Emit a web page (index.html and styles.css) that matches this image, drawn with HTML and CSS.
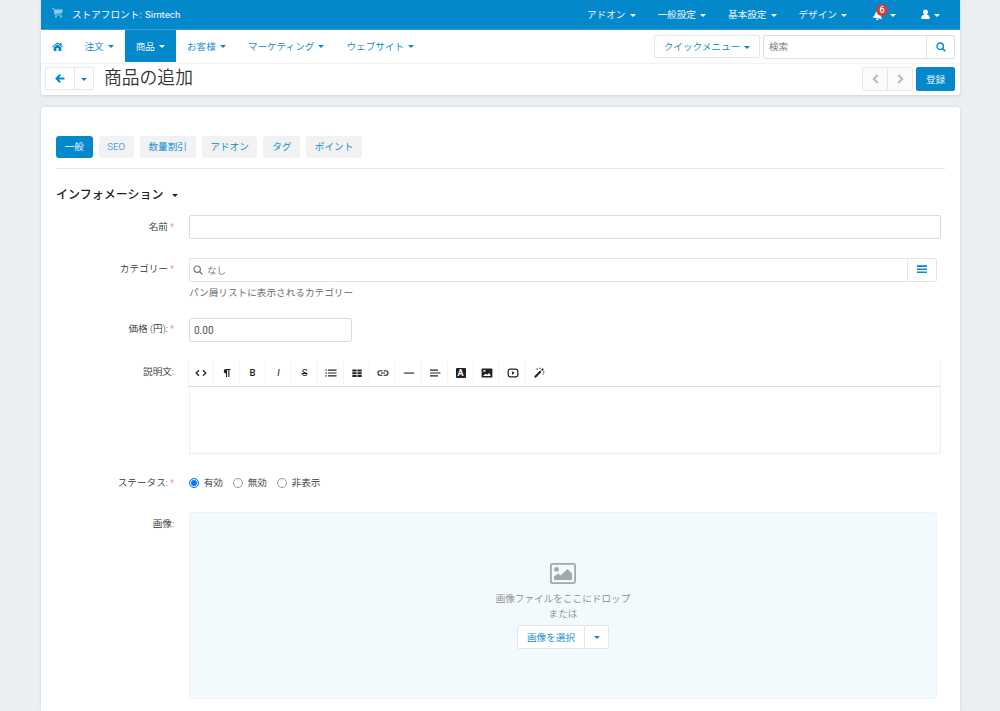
FILE: index.html
```html
<!DOCTYPE html>
<html lang="ja">
<head>
    <meta charset="UTF-8">
    <title>商品の追加</title>
    <link rel="stylesheet" href="styles.css">
</head>
<body>
<div class="header">
  <div class="topbar">
    <svg class="cart" width="11" height="10" viewBox="0 0 11 10"><path d="M0 .6h1.900L3.200 7h6.600" fill="none" stroke="currentColor" stroke-width=".9"/><path d="M2.300 1.400h8.500l-.8 3.900-7 .6z" fill="currentColor"/><circle cx="4" cy="8.700" r=".9" fill="currentColor"/><circle cx="9" cy="8.700" r=".9" fill="currentColor"/></svg>
    <span class="store">ストアフロント: Simtech</span>
    <ul class="topmenu">
      <li>アドオン<b class="caret"></b></li>
      <li>一般設定<b class="caret"></b></li>
      <li>基本設定<b class="caret"></b></li>
      <li>デザイン<b class="caret"></b></li>
      <li class="bell"><svg width="12" height="12" viewBox="0 0 12 12"><path d="M6 1C3.8 1.2 3.2 3 3 5.5 2.8 7.5 2 8.3.7 9.3h10.6C10 8.3 9.2 7.5 9 5.5 8.8 3 8.200 1.200 6 1zM4.600 10h2.800c-.3 1.700-2.500 1.700-2.800 0z" fill="currentColor" transform="rotate(12 6 6)"/></svg><span class="badge">6</span><b class="caret"></b></li>
      <li class="user"><svg width="9" height="11" viewBox="0 0 9 11"><path d="M4.500.5C2.900.5 2 1.600 2 3.100c0 1.200.6 2.200 1.300 2.700C1.500 6 .2 7.200.2 9.200c0 .5.3.8.8.8h7c.5 0 .8-.3.8-.8 0-2-1.300-3.200-3.100-3.400C6.400 5.300 7 4.300 7 3.100 7 1.600 6.100.5 4.500.5z" fill="currentColor"/></svg><b class="caret"></b></li>
    </ul>
  </div>
  <div class="navbar">
    <ul class="menu">
      <li class="home"><svg width="11" height="9" viewBox="0 0 11 9"><path d="M5.500.3 0 4.800l.6.700L5.500 1.500l4.900 4 .6-.7-1.600-1.300V.9H8v1.400zM5.500 2.300 1.700 5.400V9h2.800V6h2v3h2.800V5.400z" fill="currentColor"/></svg></li>
      <li>注文<b class="caret"></b></li>
      <li class="active">商品<b class="caret"></b></li>
      <li>お客様<b class="caret"></b></li>
      <li>マーケティング<b class="caret"></b></li>
      <li>ウェブサイト<b class="caret"></b></li>
    </ul>
    <button class="btn quick">クイックメニュー<b class="caret"></b></button>
    <div class="search">
      <input type="text" placeholder="検索">
      <span class="go"><svg width="10" height="10" viewBox="0 0 10 10" fill="none" stroke="currentColor"><circle cx="4.200" cy="4.200" r="3.200" stroke-width="1.400"/><path d="M6.500 6.500 9.300 9.300" stroke-width="1.600"/></svg></span>
    </div>
  </div>
  <div class="titlebar">
    <div class="group back">
      <button class="btn"><svg width="10" height="9" viewBox="0 0 10 9" fill="none" stroke="currentColor" stroke-width="2"><path d="M9.500 4.500H1.500M5.200.8 1.500 4.500 5.200 8.200"/></svg></button>
      <button class="btn"><b class="caret"></b></button>
    </div>
    <h1>商品の追加</h1>
    <div class="group pager">
      <button class="btn"><svg width="7" height="10" viewBox="0 0 7 10" fill="none" stroke="currentColor" stroke-width="2"><path d="M5.800 1 1.800 5l4 4"/></svg></button>
      <button class="btn"><svg width="7" height="10" viewBox="0 0 7 10" fill="none" stroke="currentColor" stroke-width="2"><path d="M1.200 1l4 4-4 4"/></svg></button>
    </div>
    <button class="btn primary">登録</button>
  </div>
</div>

<div class="content">
  <ul class="tabs">
    <li class="active">一般</li>
    <li>SEO</li>
    <li>数量割引</li>
    <li>アドオン</li>
    <li>タグ</li>
    <li>ポイント</li>
  </ul>
  <h2>インフォメーション<b class="caret"></b></h2>

  <div class="row name">
    <label>名前<i>*</i></label>
    <input type="text" class="field">
  </div>
  <div class="row category">
    <label>カテゴリー<i>*</i></label>
    <div class="controls">
      <div class="picker">
        <div class="pick"><svg width="10" height="10" viewBox="0 0 10 10" fill="none" stroke="currentColor"><circle cx="4.200" cy="4.200" r="3.200" stroke-width="1.200"/><path d="M6.500 6.500 9.300 9.300" stroke-width="1.400"/></svg>なし</div>
        <div class="list"><svg width="10" height="9" viewBox="0 0 10 9"><path d="M0 .3h10v1.600H0zM0 3.400h10V5H0zM0 6.500h10v1.600H0z" fill="currentColor"/></svg></div>
      </div>
      <p class="help">パン屑リストに表示されるカテゴリー</p>
    </div>
  </div>
  <div class="row price">
    <label>価格 (円):<i>*</i></label>
    <input type="text" class="field short" value="0.00">
  </div>
  <div class="row desc">
    <label>説明文:</label>
    <div class="editor">
      <div class="toolbar">
        <span><svg width="12" height="12" viewBox="0 0 12 12" fill="none" stroke="currentColor" stroke-width="1.300"><path d="M4 3.200 1.200 6 4 8.800M8 3.200 10.800 6 8 8.800"/></svg></span>
        <span><svg width="12" height="12" viewBox="0 0 12 12"><path d="M9.500 2H5a2.300 2.300 0 0 0 0 4.600V10h1.100V3.100h1.200V10h1.100V3.100h1.100z" fill="currentColor"/></svg></span>
        <span class="bold">B</span>
        <span class="italic">I</span>
        <span class="strike">S</span>
        <span><svg width="12" height="12" viewBox="0 0 12 12"><path d="M.5 2.500h1.300v1.300H.5zM.5 5.400h1.300v1.300H.5zM.5 8.200h1.300v1.300H.5zM3 2.500h8.500v1.200H3zM3 5.400h8.500v1.200H3zM3 8.200h8.500v1.200H3z" fill="currentColor"/></svg></span>
        <span><svg width="12" height="12" viewBox="0 0 12 12"><path d="M1.300 2.500h4.300v2H1.300zM6.400 2.500h4.300v2H6.400zM1.300 5.200h4.300v2H1.300zM6.400 5.200h4.300v2H6.400zM1.300 7.900h4.300v2H1.300zM6.400 7.900h4.300v2H6.400z" fill="currentColor"/></svg></span>
        <span><svg width="12" height="12" viewBox="0 0 12 12" fill="none" stroke="currentColor" stroke-width="1.100"><path d="M5.300 3.700H3.300a2.300 2.300 0 0 0 0 4.600h2M6.700 3.700h2a2.300 2.300 0 0 1 0 4.600h-2M4 6h4"/></svg></span>
        <span><svg width="12" height="12" viewBox="0 0 12 12"><path d="M.8 5.500h10.400v1.100H.8z" fill="currentColor"/></svg></span>
        <span><svg width="12" height="12" viewBox="0 0 12 12"><path d="M1 2.500h8v1.200H1zM1 5.400h10.500v1.200H1zM1 8.200h8v1.200H1z" fill="currentColor"/></svg></span>
        <span><em class="color">A</em></span>
        <span><svg width="12" height="12" viewBox="0 0 12 12"><path fill-rule="evenodd" d="M1.200 1.500h9.600q.6 0 .6.600v7.800q0 .6-.6.600H1.200q-.6 0-.6-.6V2.100q0-.6.600-.6zM2.500 3v1.800h1.800V3zM2 9h8L8 6 6.300 7.800 4.500 6.800z" fill="currentColor"/></svg></span>
        <span><svg width="12" height="12" viewBox="0 0 12 12"><rect x="1.200" y="2.200" width="9.600" height="7.600" rx="2" fill="none" stroke="currentColor" stroke-width="1.200"/><path d="M5 4.300v3.400L7.800 6z" fill="currentColor"/></svg></span>
        <span><svg width="12" height="12" viewBox="0 0 12 12" fill="none" stroke="currentColor"><path d="M1.800 10.200 7.800 4.200" stroke-width="2"/><path d="M8.600 3.400 10.300 1.700" stroke-width="1.600"/><path d="M3.500 2h1.500M6.500 1.300h1.300M10 5h1.500M9.700 7h1" stroke-width="1"/></svg></span>
      </div>
      <div class="text"></div>
    </div>
  </div>
  <div class="row status">
    <label>ステータス:<i>*</i></label>
    <div class="radios">
      <span class="radio checked"></span>有効
      <span class="radio"></span>無効
      <span class="radio"></span>非表示
    </div>
  </div>
  <div class="row image">
    <label>画像:</label>
    <div class="dropzone">
      <svg width="26" height="21" viewBox="0 0 26 21"><rect x=".9" y=".9" width="24.200" height="19.200" rx="1.500" fill="none" stroke="#a3a9ab" stroke-width="1.800"/><circle cx="6.500" cy="6.300" r="2.400" fill="#a3a9ab"/><path d="M4 17v-3.500l4-3 2.500 2L17.500 6l4.500 4.500V17z" fill="#a3a9ab"/></svg>
      <p>画像ファイルをここにドロップ<br>または</p>
      <div class="group">
        <button class="btn">画像を選択</button>
        <button class="btn"><b class="caret"></b></button>
      </div>
    </div>
  </div>
</div>
</body>
</html>
```
FILE: styles.css
```css
* {
  box-sizing: border-box;
}

body {
  margin: 0;
  padding: 0 40px 0 41px;
  height: 711px;
  overflow: hidden;
  background: #ebeff2;
  color: #333;
  font-family: Roboto, "Noto Sans CJK JP", sans-serif;
  font-size: 9.65px;
  font-weight: 350;
  line-height: 15px;
  display: flex;
  flex-direction: column;
}

ul, h1, h2, p {
  margin: 0;
  padding: 0;
  list-style: none;
}

svg { display: block; flex: none; }

input, button {
  font: inherit;
  color: inherit;
  outline: none;
}

.caret {
  display: inline-block;
  flex: none;
  border: 3px solid transparent;
  border-top-color: currentColor;
  border-bottom: 0;
  margin-left: 4px;
  margin-top: 1px;
}

.btn {
  display: flex;
  align-items: center;
  justify-content: center;
  height: 23px;
  padding: 0;
  background: #fff;
  border: 1px solid #e1e6eb;
  border-radius: 2px;
  color: #0388cc;
}

.group { display: flex; }
.group .caret { margin-left: 0; }
.group .btn:first-child { border-radius: 2px 0 0 2px; }
.group .btn:last-child { border-radius: 0 2px 2px 0; border-left: 0; }

/* header */
.header {
  flex: none;
  height: 95px;
  background: #fff;
  border-radius: 0 0 3px 3px;
  box-shadow: 0 1px 3px rgba(0,0,0,0.12);
}

.topbar {
  display: flex;
  align-items: center;
  height: 30px;
  padding-left: 11px;
  background: #0388cc;
  border-bottom: 1px solid #3a9fd6;
  color: #fff;
}

.cart { color: #8fcbea; margin-top: -4px; }
.store { margin-left: 9px; font-weight: 400; word-spacing: 1px; }

.topmenu {
  display: flex;
  margin-left: auto;
  padding-right: 20px;
}

.topmenu li {
  display: flex;
  align-items: center;
  margin-left: 22px;
}

.topmenu .bell { position: relative; margin-left: 25px; }
.topmenu .bell .caret { margin-left: 6px; }
.topmenu .user { margin-left: 25px; }

.badge {
  position: absolute;
  left: 4px;
  top: -3px;
  width: 12px;
  height: 12px;
  border-radius: 6px;
  background: #c5443f;
  font-size: 9px;
  font-weight: 500;
  line-height: 12px;
  text-align: center;
}

.navbar {
  display: flex;
  height: 34px;
  border-bottom: 1px solid #f2f2f2;
  padding-right: 5px;
}

.menu {
  display: flex;
  margin-right: auto;
  color: #0388cc;
}

.menu li {
  display: flex;
  align-items: center;
  height: 32px;
  padding: 0 11px;
}

.menu .home { padding-right: 10.5px; }
.menu .active { background: #0388cc; color: #fff; }

.quick {
  width: 106px;
  margin: 5px 3px 0 0;
}

.search {
  display: flex;
  width: 192px;
  height: 24px;
  margin-top: 5px;
  border: 1px solid #d9e0e7;
  border-radius: 2px;
}

.search input {
  flex: 1;
  min-width: 0;
  border: 0;
  padding: 0 5px 2px;
  background: none;
}

.search input::placeholder { color: #777; }

.go {
  display: flex;
  align-items: center;
  justify-content: center;
  width: 28px;
  border-left: 1px solid #dde3e9;
  color: #0388cc;
}

.titlebar {
  display: flex;
  padding: 3px 5px 0 4px;
}

.back .btn:first-child { width: 30px; }
.back .btn:last-child { width: 19px; }

h1 {
  margin: -2px auto 0 10px;
  font-size: 17.8px;
  font-weight: 350;
  line-height: 25px;
  color: #333;
}

.pager .btn {
  width: 26px;
  height: 24px;
  background: #fbfbfb;
  border-color: #e6e6e6;
  color: #bbb;
}

.pager .btn:last-child { width: 25px; }

.primary {
  width: 39px;
  height: 24px;
  margin-left: 3px;
  background: #0388cc;
  border-color: #0388cc;
  color: #fff;
}

/* page */
.content {
  flex: 1;
  margin-top: 12px;
  padding: 29px 15px 0;
  background: #fff;
  border-radius: 3px 3px 0 0;
  box-shadow: 0 0 3px rgba(0,0,0,0.12);
}

.tabs {
  display: flex;
  gap: 6px;
  height: 33px;
  border-bottom: 1px solid #e0e6ee;
}

.tabs li {
  height: 22px;
  padding: 0 8.7px;
  border-radius: 3px;
  background: #f2f2f2;
  color: #0388cc;
  line-height: 22px;
}

.tabs .active { background: #0388cc; color: #fff; }

h2 {
  display: flex;
  align-items: center;
  height: 20px;
  margin-top: 16px;
  font-size: 12px;
  font-weight: 500;
  color: #222;
}

h2 .caret { margin-left: 9px; }

.row {
  display: flex;
  padding-right: 4px;
}

.row label {
  flex: none;
  width: 118px;
  margin-right: 15px;
  padding-top: 3px;
  text-align: right;
}

.row i { color: #f0405a; font-style: normal; margin-left: 2px; }

.name { height: 24px; margin-top: 10px; }
.name label { padding-top: 4px; }
.name .field { flex: 1; }
.category { height: 42px; margin-top: 19px; }
.price { height: 24px; margin-top: 18px; }
.desc { height: 94px; margin-top: 18px; }
.status { height: 16px; margin-top: 21px; }
.image { height: 187px; margin-top: 21px; }
.desc label { padding-top: 4px; }
.status label { padding-top: 0; }

.field {
  height: 24px;
  padding: 0 4px;
  border: 1px solid #d5dee5;
  border-radius: 2px;
}

.short {
  width: 163px;
  font-size: 10px;
  font-weight: 400;
  color: #555;
}

.controls { flex: 1; padding-right: 4px; }

.picker {
  display: flex;
  height: 24px;
  border: 1px solid #e2e5e8;
  border-radius: 2px;
}

.pick {
  display: flex;
  align-items: center;
  gap: 4px;
  flex: 1;
  padding-left: 3px;
  color: #777;
}

.list {
  display: flex;
  align-items: center;
  justify-content: center;
  width: 29px;
  padding-bottom: 2px;
  border-left: 1px solid #e2e5e8;
  color: #0388cc;
}

.help { margin-top: 3px; color: #5c6166; }

.editor { flex: 1; }

.toolbar {
  display: flex;
  height: 27px;
  margin-left: -1px;
  padding-bottom: 1px;
  border-right: 1px solid #f2f2f2;
  border-bottom: 1px solid #dcdcdc;
}

.toolbar span {
  display: flex;
  align-items: center;
  justify-content: center;
  width: 26px;
  border-right: 1px solid #f4f4f4;
  color: #222;
}

.toolbar span:first-child { border-left: 1px solid #f2f2f2; }
.toolbar span:last-child { border-right: 0; }
.toolbar .bold { font-weight: 500; }
.toolbar .italic { font-style: italic; font-weight: 400; }
.toolbar .strike { text-decoration: line-through; font-weight: 400; }

.color {
  width: 10px;
  height: 10px;
  border-radius: 1px;
  background: #222;
  color: #fff;
  font-size: 9px;
  font-style: normal;
  font-weight: 700;
  line-height: 10px;
  text-align: center;
}

.text {
  height: 67px;
  border: 1px solid #eee;
  border-top: 0;
}

.radios { display: flex; align-items: center; height: 15px; }

.radio {
  width: 10px;
  height: 10px;
  margin: 0 4.7px 0 10px;
  border: 1px solid #999;
  border-radius: 50%;
}

.radio.checked {
  margin-left: 0;
  border-color: #0075ff;
  background: #0075ff;
  box-shadow: inset 0 0 0 1px #fff;
}

.image label { padding-top: 4px; }

.dropzone {
  display: flex;
  flex-direction: column;
  align-items: center;
  flex: 1;
  margin-right: 4px;
  padding-top: 50px;
  background: #f3fafe;
  border: 1px solid #edf4f7;
  border-radius: 3px;
  color: #888;
  text-align: center;
}

.dropzone p { margin: 7px 0 4px; }
.dropzone .btn { height: 24px; }
.dropzone .btn:first-child { width: 68px; }
.dropzone .btn:last-child { width: 24px; }
```
